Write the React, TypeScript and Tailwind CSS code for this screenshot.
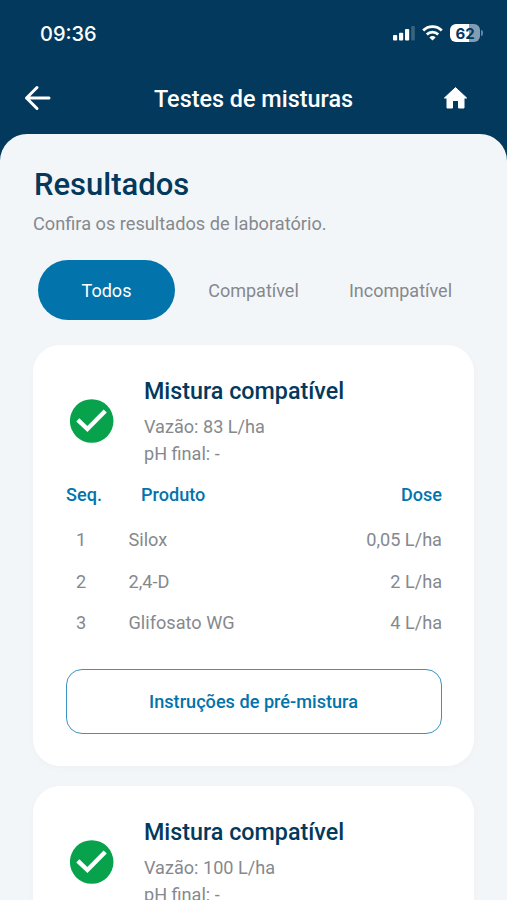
import React from 'react'

interface Product {
  name: string
  dose: string
}

interface Mixture {
  flow: string
  ph: string
  products?: Product[]
}

const filters = [
  { label: 'Todos', className: 'w-[137px] bg-[#0274ab] text-white' },
  { label: 'Compatível', className: 'w-[157px] text-[#85898e]' },
  { label: 'Incompatível', className: 'w-[137px] text-[#85898e]' },
]

const mixtures: Mixture[] = [
  {
    flow: '83 L/ha',
    ph: '-',
    products: [
      { name: 'Silox', dose: '0,05 L/ha' },
      { name: '2,4-D', dose: '2 L/ha' },
      { name: 'Glifosato WG', dose: '4 L/ha' },
    ],
  },
  { flow: '100 L/ha', ph: '-' },
]

const StatusBar = () => (
  <div className="flex h-[66px] items-center pr-[24px] pl-[40px] text-white">
    <span className="flex-1 pt-px font-['Inter'] text-[20px] leading-6 font-medium">
      09:36
    </span>
    <svg width="23" height="16" viewBox="0 0 23 16" fill="currentColor">
      <rect x="0" y="10" width="4.2" height="5.4" rx="1" />
      <rect x="6" y="7.7" width="4.2" height="7.7" rx="1" />
      <rect x="12" y="4" width="4.2" height="11.4" rx="1" />
      <rect x="18.2" y="1" width="3.6" height="14.4" rx="1" opacity="0.22" />
    </svg>
    <svg
      className="ml-[6px]"
      width="21"
      height="16"
      viewBox="0 0 21 16"
      fill="none"
      stroke="currentColor"
      strokeWidth="2.8"
    >
      <path d="M1.2 5.4a13.2 13.2 0 0 1 18.6 0" />
      <path d="M4.8 9.5a8.1 8.1 0 0 1 11.4 0" />
      <path
        d="M7.4 12.4a4.4 4.4 0 0 1 6.2 0L10.5 15.6z"
        fill="currentColor"
        stroke="none"
      />
    </svg>
    <div className="ml-[7px] flex h-[18px] w-[30px] items-center justify-center rounded-[6px] bg-linear-to-r from-white from-62% to-[#819db3] to-62% font-['Inter'] text-[15px] leading-none font-bold text-[#02395c]">
      62
    </div>
    <div className="ml-px h-[6px] w-[2px] rounded-r-full bg-[#6386a0]" />
  </div>
)

const Header = () => (
  <header className="h-[134px] text-white">
    <StatusBar />
    <div className="flex h-[64px] items-center justify-between pr-[39px] pl-[24px]">
      <button aria-label="Voltar">
        <svg
          width="28"
          height="26"
          viewBox="0 0 28 26"
          fill="none"
          stroke="currentColor"
          strokeWidth="3"
          strokeLinecap="round"
          strokeLinejoin="round"
        >
          <path d="M25 13H2.5M13 2.5 2.5 13 13 23.5" />
        </svg>
      </button>
      <h1 className="mt-px ml-[12px] text-[23.4px] leading-7 font-medium">
        Testes de misturas
      </h1>
      <button aria-label="Início">
        <svg width="25" height="24" viewBox="0 0 25 24" fill="currentColor">
          <path
            d="M12.5 1.6 23.6 12h-2.6v10h-5.5v-7.5H9.5V22H4V12H1.4z"
            stroke="currentColor"
            strokeLinejoin="round"
          />
        </svg>
      </button>
    </div>
  </header>
)

const CheckBadge = () => (
  <svg width="44" height="44" viewBox="0 0 44 44">
    <circle cx="21.7" cy="22" r="21.8" fill="#07a24b" />
    <path
      d="M7.8 20.8 17.4 30 35.2 12"
      fill="none"
      stroke="#fff"
      strokeWidth="4.4"
    />
  </svg>
)

const ProductTable = ({ products }: { products: Product[] }) => (
  <>
    <div className="mt-[16px] flex h-[24px] items-center text-[18.1px] font-medium text-[#0274ab]">
      <span className="w-[75px]">Seq.</span>
      <span className="flex-1">Produto</span>
      <span>Dose</span>
    </div>
    <div className="mt-[12px] text-[18.15px] text-[#85898e]">
      {products.map((product, index) => (
        <div key={product.name} className="flex h-[41.5px] items-center">
          <span className="w-[30px] text-center">{index + 1}</span>
          <span className="flex-1 pl-[32.5px]">{product.name}</span>
          <span>{product.dose}</span>
        </div>
      ))}
    </div>
    <button className="mt-[25px] h-[65px] w-full rounded-[16px] border-[1.5px] border-[#3d93bf] pt-px pr-px text-[18.15px] font-medium text-[#0274ab]">
      Instruções de pré-mistura
    </button>
  </>
)

const MixtureCard = ({ mixture }: { mixture: Mixture }) => (
  <article className="h-[421px] rounded-[27px] bg-white pt-[30px] pr-[32px] pl-[33px] shadow-[0_2px_8px_rgba(0,0,0,0.025)]">
    <div className="flex">
      <div className="w-[78px] pt-[24px] pl-[4px]">
        <CheckBadge />
      </div>
      <div className="text-[18.1px] leading-[27px] text-[#85898e]">
        <h3 className="mb-[6px] text-[23.3px] leading-8 font-medium text-[#02395c]">
          Mistura compatível
        </h3>
        <p>Vazão: {mixture.flow}</p>
        <p>pH final: {mixture.ph}</p>
      </div>
    </div>
    {mixture.products && <ProductTable products={mixture.products} />}
  </article>
)

export default function App() {
  return (
    <div className="h-[900px] w-[507px] overflow-hidden bg-[#02395c] font-['Roboto',sans-serif]">
      <Header />
      <main className="h-[766px] overflow-hidden rounded-t-[27px] bg-[#f3f6f8] px-[33px] pt-[31px]">
        <h2 className="pl-px text-[31px] leading-10 font-medium text-[#02395c]">
          Resultados
        </h2>
        <p className="mt-[6px] text-[18.2px] leading-[26px] text-[#85898e]">
          Confira os resultados de laboratório.
        </p>
        <nav className="mt-[23px] flex h-[60px] pl-[5px] text-[18px]">
          {filters.map((filter) => (
            <button
              key={filter.label}
              className={`rounded-full ${filter.className}`}
            >
              {filter.label}
            </button>
          ))}
        </nav>
        <div className="mt-[25px] flex flex-col gap-[20px]">
          {mixtures.map((mixture) => (
            <MixtureCard key={mixture.flow} mixture={mixture} />
          ))}
        </div>
      </main>
    </div>
  )
}
